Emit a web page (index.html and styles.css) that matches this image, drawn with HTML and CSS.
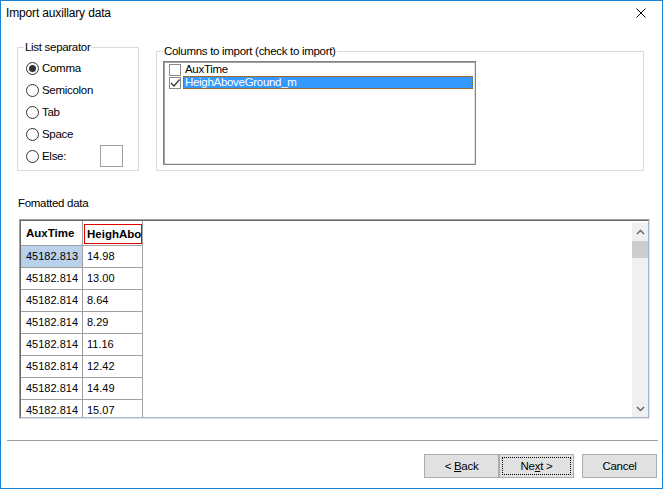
FILE: index.html
```html
<!DOCTYPE html>
<html>

<head>
    <meta charset="utf-8">
    <title>Import auxillary data</title>
    <link rel="stylesheet" href="styles.css">
</head>

<body>
    <div class="dialog">
        <div class="titlebar">
            <span class="title">Import auxillary data</span>
            <svg class="close" width="10" height="10" viewBox="0 0 10 10">
                <path d="M0.5 0.5 L9.5 9.5 M9.5 0.5 L0.5 9.5" stroke="#000" stroke-width="1" fill="none"/>
            </svg>
        </div>

        <div class="content">
            <div class="options">
                <fieldset class="group separator">
                    <legend>List separator</legend>
                    <div class="radio-list">
                        <div class="radio checked"><span class="dot"></span>Comma</div>
                        <div class="radio"><span class="dot"></span>Semicolon</div>
                        <div class="radio"><span class="dot"></span>Tab</div>
                        <div class="radio"><span class="dot"></span>Space</div>
                        <div class="radio"><span class="dot"></span>Else:<span class="textbox"></span></div>
                    </div>
                </fieldset>

                <fieldset class="group columns">
                    <legend>Columns to import (check to import)</legend>
                    <div class="listbox">
                        <div class="item">
                            <span class="check"></span>
                            <span class="text">AuxTime</span>
                        </div>
                        <div class="item">
                            <span class="check">
                                <svg width="10" height="10" viewBox="0 0 10 10">
                                    <path d="M1 5 L4 8 L9.5 1.5" stroke="#333" stroke-width="1.2" fill="none"/>
                                </svg>
                            </span>
                            <span class="text selected">HeighAboveGround_m</span>
                        </div>
                    </div>
                </fieldset>
            </div>

            <div class="grid-label">Fomatted data</div>

            <div class="grid">
                <div class="grid-body">
                    <div class="grid-cells">
                        <table>
                            <tr>
                                <th class="c1">AuxTime</th>
                                <th class="c2"><span class="head-focus">HeighAboveGround_m</span></th>
                            </tr>
                            <tr><td class="c1 current">45182.813</td><td class="c2">14.98</td></tr>
                            <tr><td class="c1">45182.814</td><td class="c2">13.00</td></tr>
                            <tr><td class="c1">45182.814</td><td class="c2">8.64</td></tr>
                            <tr><td class="c1">45182.814</td><td class="c2">8.29</td></tr>
                            <tr><td class="c1">45182.814</td><td class="c2">11.16</td></tr>
                            <tr><td class="c1">45182.814</td><td class="c2">12.42</td></tr>
                            <tr><td class="c1">45182.814</td><td class="c2">14.49</td></tr>
                            <tr><td class="c1">45182.814</td><td class="c2">15.07</td></tr>
                        </table>
                    </div>
                    <div class="vscroll">
                        <div class="arrow">
                            <svg width="9" height="6" viewBox="0 0 9 6"><path d="M1 5 L4.5 1.5 L8 5" stroke="#606060" stroke-width="1.4" fill="none"/></svg>
                        </div>
                        <div class="thumb"></div>
                        <div class="track"></div>
                        <div class="arrow">
                            <svg width="9" height="6" viewBox="0 0 9 6"><path d="M1 1 L4.5 4.5 L8 1" stroke="#606060" stroke-width="1.4" fill="none"/></svg>
                        </div>
                    </div>
                </div>
            </div>
        </div>

        <div class="divider"></div>

        <div class="buttons">
            <div class="button"><span>&lt; <u>B</u>ack</span></div>
            <div class="button default"><span class="focus"><span>Ne<u>x</u>t &gt;</span></span></div>
            <div class="button cancel"><span>Cancel</span></div>
        </div>
    </div>
</body>

</html>
```

FILE: styles.css
```css
body {
    margin: 0;
    font: 11.5px/14px "Liberation Sans", Arial, sans-serif;
    letter-spacing: -0.3px;
    color: #000;
    background: #fff;
}

.dialog {
    width: 663px;
    height: 489px;
    box-sizing: border-box;
    border: 1px solid #1883d7;
    background: #fff;
    display: flex;
    flex-direction: column;
}

/* title bar */

.titlebar {
    height: 24px;
    display: flex;
    align-items: center;
    padding: 0 16px 0 5px;
}

.titlebar .title {
    flex: 1;
    font-size: 12px;
    letter-spacing: -0.15px;
}

/* top options */

.content {
    padding: 15px 0 0 16px;
}

.options {
    display: flex;
    align-items: stretch;
    height: 131px;
}

.group {
    margin: 0;
    padding: 0;
    min-width: 0;
    border: 1px solid #dcdcdc;
    box-sizing: border-box;
}

.group legend {
    margin-left: 6px;
    padding: 0 1px;
    line-height: 14px;
}

.separator {
    width: 122px;
}

.columns {
    width: 488px;
    margin: 4px 0 0 17px;
}

.radio-list {
    padding: 3px 0 0 8px;
}

.radio {
    display: flex;
    align-items: center;
    height: 22px;
}

.radio .dot {
    width: 13px;
    height: 13px;
    box-sizing: border-box;
    border: 1px solid #333;
    border-radius: 50%;
    margin-right: 3px;
    display: flex;
    align-items: center;
    justify-content: center;
}

.radio.checked .dot:after {
    content: "";
    width: 7px;
    height: 7px;
    border-radius: 50%;
    background: #333;
}

.radio .textbox {
    width: 23px;
    height: 22px;
    box-sizing: border-box;
    border: 1px solid #a0a0a0;
    margin-left: 34px;
}

.listbox {
    width: 313px;
    height: 104px;
    box-sizing: border-box;
    margin: 3px 0 0 6px;
    padding: 1px 0 0 4px;
    border: 1px solid #828282;
    box-shadow: inset 1px 1px 0 #a0a0a0, inset -1px -1px 0 #e3e3e3;
}

.listbox .item {
    display: flex;
    align-items: center;
    height: 13px;
    margin-left: 1px;
}

.listbox .check {
    width: 12px;
    height: 12px;
    box-sizing: border-box;
    border: 1px solid #8a8a8a;
    margin-right: 2px;
    display: flex;
    align-items: center;
    justify-content: center;
}

.listbox .text {
    padding: 0 2px;
    line-height: 13px;
    height: 13px;
    overflow: hidden;
}

.listbox .text.selected {
    flex: 1;
    margin-right: 2px;
    background: #3399ff;
    color: #fff;
    box-sizing: border-box;
    border: 1px dotted #8a5a1c;
    padding: 0 1px;
    line-height: 11px;
}

/* formatted data grid */

.grid-label {
    margin-top: 25px;
    padding-left: 1px;
}

.grid {
    width: 631px;
    height: 200px;
    box-sizing: border-box;
    margin: 9px 0 0 2px;
    border: 1px solid;
    border-color: #a0a0a0 #e3e3e3 #e3e3e3 #a0a0a0;
}

.grid-body {
    height: 100%;
    box-sizing: border-box;
    border: 1px solid;
    border-color: #696969 #a7b6c7 #a7b6c7 #696969;
    display: flex;
}

.grid-cells {
    flex: 1;
    overflow: hidden;
}

.grid table {
    border-collapse: separate;
    border-spacing: 0;
    table-layout: fixed;
    width: 122px;
    font: 11px "Liberation Sans", Arial, sans-serif;
    letter-spacing: 0;
}

.grid th,
.grid td {
    box-sizing: border-box;
    border-right: 1px solid #a0a0a0;
    border-bottom: 1px solid #a0a0a0;
    padding: 0 0 0 4px;
    white-space: nowrap;
    overflow: hidden;
    text-align: left;
}

.grid .c1 {
    width: 62px;
    padding-left: 5px;
}

.grid .c2 {
    width: 60px;
}

.grid th {
    height: 25px;
    font-size: 11.5px;
    font-weight: bold;
    line-height: 24px;
}

.grid th.c2 {
    padding: 3px 0 1px 1px;
}

.grid .head-focus {
    display: block;
    height: 20px;
    box-sizing: border-box;
    border: 1px solid #e00000;
    padding-left: 2px;
    line-height: 18px;
    overflow: hidden;
}

.grid td {
    height: 22px;
    line-height: 21px;
}

.grid td.current {
    background: #b9d1ea;
}

.vscroll {
    width: 16px;
    margin-top: 2px;
    background: #f0f0f0;
    display: flex;
    flex-direction: column;
}

.vscroll .arrow {
    height: 17px;
    display: flex;
    align-items: center;
    justify-content: center;
}

.vscroll .thumb {
    height: 17px;
    margin-top: 1px;
    background: #cdcdcd;
}

.vscroll .track {
    flex: 1;
}

/* footer */

.divider {
    height: 1px;
    background: #a0a0a0;
    margin: 21px 4px 0 6px;
}

.buttons {
    display: flex;
    justify-content: flex-end;
    margin-top: 13px;
    padding-right: 5px;
}

.button {
    width: 75px;
    height: 24px;
    box-sizing: border-box;
    border: 1px solid #adadad;
    background: #e1e1e1;
    display: flex;
    align-items: center;
    justify-content: center;
}

.button.cancel {
    margin-left: 8px;
}

.button.default {
    padding: 2px;
}

.button .focus {
    width: 100%;
    height: 100%;
    box-sizing: border-box;
    border: 1px dotted #000;
    display: flex;
    align-items: center;
    justify-content: center;
}
```
